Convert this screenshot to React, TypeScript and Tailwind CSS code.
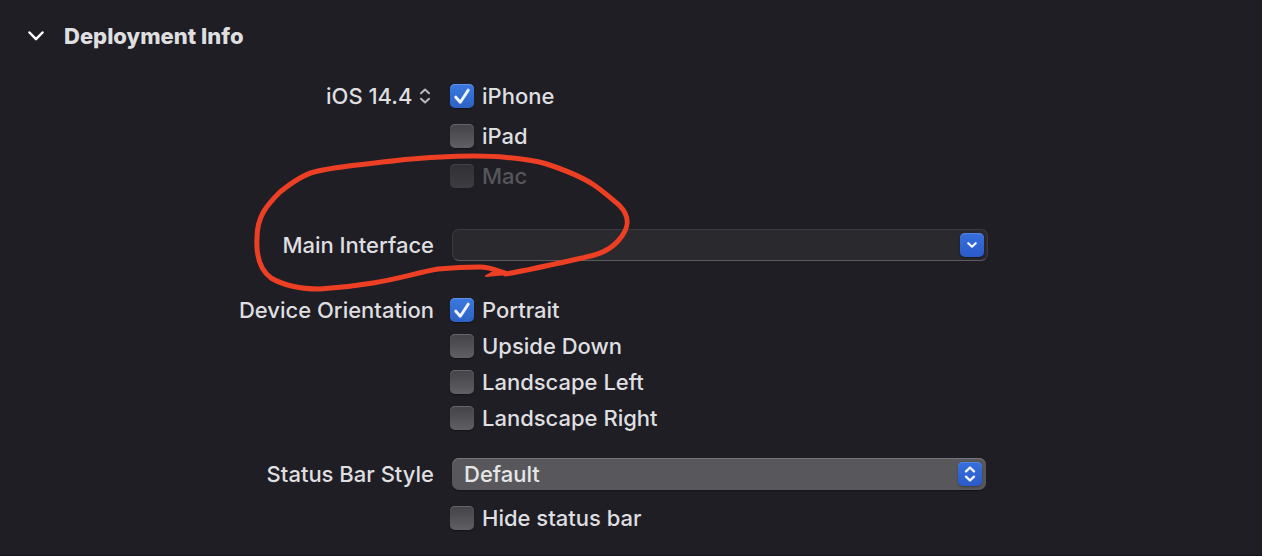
import { useState } from "react";
import type { ReactNode } from "react";

function CheckRow({
  label,
  checked = false,
  disabled = false,
}: {
  label: string;
  checked?: boolean;
  disabled?: boolean;
}) {
  const [on, setOn] = useState(checked);
  return (
    <label className={`flex h-6 w-fit items-center gap-2 ${disabled ? "text-[#56565b]" : ""}`}>
      <span className="grid size-6 shrink-0">
        <input
          type="checkbox"
          checked={on}
          disabled={disabled}
          onChange={() => setOn(!on)}
          className="col-start-1 row-start-1 size-6 appearance-none rounded-[5px] bg-linear-to-b from-[#434347] to-[#606064] shadow-[inset_0_1px_0_#66666a,0_1px_1px_#131318] checked:from-[#3b79df] checked:to-[#2d62c4] checked:shadow-[inset_0_1px_0_#5d92ea,0_1px_1px_#131318] disabled:from-[#303034] disabled:to-[#3e3e42] disabled:shadow-[inset_0_1px_0_#424246]"
        />
        {on && (
          <svg
            viewBox="0 0 24 24"
            className="pointer-events-none col-start-1 row-start-1 size-6"
            fill="none"
            stroke="#eef3fd"
            strokeWidth="3"
            strokeLinecap="round"
            strokeLinejoin="round"
            aria-hidden="true"
          >
            <path d="M5.8 13.2 L10.3 18.2 L18.2 6.2" />
          </svg>
        )}
      </span>
      {label}
    </label>
  );
}

function UpDown({ className, width }: { className: string; width: string }) {
  return (
    <svg
      viewBox="0 0 12 18"
      className={className}
      fill="none"
      stroke="currentColor"
      strokeWidth={width}
      strokeLinecap="round"
      strokeLinejoin="round"
      aria-hidden="true"
    >
      <path d="M2 6.3 L6 2.5 L10 6.3 M2 11.7 L6 15.5 L10 11.7" />
    </svg>
  );
}

function Row({ label, children }: { label: ReactNode; children: ReactNode }) {
  return (
    <div className="grid grid-cols-[434px_minmax(0,1fr)] items-start gap-x-4">
      <div className="flex justify-end">{label}</div>
      <div>{children}</div>
    </div>
  );
}

export default function App() {
  const [open, setOpen] = useState(true);
  return (
    <main className="relative min-h-screen overflow-hidden border-b border-[#141319] bg-[#1f1e25] pt-5 pb-6 font-['Inter','Liberation_Sans',sans-serif] text-[22px] leading-6 font-medium text-[#dfdfe0]">
      <h2 className="pl-7 font-extrabold">
        <button
          type="button"
          aria-expanded={open}
          onClick={() => setOpen(!open)}
          className="flex h-8 items-center gap-5"
        >
          <svg
            viewBox="0 0 16 10"
            className="h-[10px] w-4"
            fill="none"
            stroke="#ffffff"
            strokeWidth="2.5"
            strokeLinecap="round"
            strokeLinejoin="round"
            aria-hidden="true"
          >
            <path d="M1.5 1.5 L8 8.2 L14.5 1.5" />
          </svg>
          Deployment Info
        </button>
      </h2>

      {open && (
        <div className="pt-8">
          <Row
            label={
              <label className="flex h-6 items-center pr-[3px]">
                <select
                  aria-label="Deployment target"
                  className="h-6 appearance-none bg-transparent leading-6"
                >
                  <option>iOS 14.4</option>
                </select>
                <UpDown className="ml-1.5 h-[18px] w-3 text-[#b9b9bb]" width="2" />
              </label>
            }
          >
            <div className="flex flex-col gap-4">
              <CheckRow label="iPhone" checked />
              <CheckRow label="iPad" />
              <CheckRow label="Mac" disabled />
            </div>
          </Row>

          <div className="pt-[41px]">
            <Row
              label={
                <label htmlFor="main-interface" className="flex h-8 items-center">
                  Main Interface
                </label>
              }
            >
              <div className="ml-0.5 flex h-8 max-w-[536px] items-center rounded-[7px] border border-[#3a3a3f] border-b-[#5c5c60] bg-[#29292e] pr-[3px]">
                <input
                  id="main-interface"
                  type="text"
                  className="h-full min-w-0 flex-1 bg-transparent px-3 outline-none"
                />
                <button
                  type="button"
                  aria-label="Show interfaces"
                  className="flex size-6 items-center justify-center rounded-[5px] bg-linear-to-b from-[#376fdc] to-[#2a5bc8] shadow-[inset_0_1px_0_#4f84e6,0_1px_2px_#17171c]"
                >
                  <svg
                    viewBox="0 0 10 6"
                    className="h-1.5 w-2.5"
                    fill="none"
                    stroke="#f0f4fd"
                    strokeWidth="2.2"
                    strokeLinecap="round"
                    strokeLinejoin="round"
                    aria-hidden="true"
                  >
                    <path d="M1.3 1.2 L5 4.7 L8.7 1.2" />
                  </svg>
                </button>
              </div>
            </Row>
          </div>

          <div className="pt-[37px]">
            <Row label={<span id="orientation">Device Orientation</span>}>
              <div role="group" aria-labelledby="orientation" className="flex flex-col gap-3">
                <CheckRow label="Portrait" checked />
                <CheckRow label="Upside Down" />
                <CheckRow label="Landscape Left" />
                <CheckRow label="Landscape Right" />
              </div>
            </Row>
          </div>

          <div className="pt-7">
            <Row
              label={
                <label htmlFor="status-bar" className="flex h-8 items-center">
                  Status Bar Style
                </label>
              }
            >
              <div className="ml-0.5 grid h-8 max-w-[534px] items-center">
                <select
                  id="status-bar"
                  className="col-start-1 row-start-1 h-8 w-full appearance-none rounded-[7px] bg-[#58585c] px-3 leading-8 text-[#e6e6e7] shadow-[inset_0_1px_0_#767679,0_1px_1px_#131318]"
                >
                  <option>Default</option>
                </select>
                <span className="pointer-events-none col-start-1 row-start-1 mr-1 flex size-6 items-center justify-center justify-self-end rounded-[5px] bg-linear-to-b from-[#376fdc] to-[#2a5bc8] shadow-[inset_0_1px_0_#4f84e6,0_1px_2px_#3c3c40]">
                  <UpDown className="h-[18px] w-3 text-[#f0f4fd]" width="2.4" />
                </span>
              </div>
            </Row>
          </div>

          <div className="pt-4">
            <Row label={null}>
              <CheckRow label="Hide status bar" />
            </Row>
          </div>
        </div>
      )}

      <svg
        viewBox="0 0 390 150"
        className="pointer-events-none absolute top-[145px] left-[245px] h-[150px] w-[390px]"
        fill="none"
        stroke="#ec3f24"
        strokeWidth="5"
        strokeLinecap="round"
        strokeLinejoin="round"
        aria-hidden="true"
      >
        <path d="M260 128 C251 126 247 122 235 122 C222 122 204 123 193 124 C175 127 153 134 128 138 C110 141 92 143 75 144 C55 144 38 140 26 133 C14 124 11 110 12 93 C12 71 22 60 35 47 C45 39 57 30 69 27 C90 21 125 19 160 14.500 C190 11.500 235 9.500 262 12.500 C278 14 288 15 300 18.500 C317 24 337 32 349 40 C359 47 367 54 374 60 C388 74 382 86 373 96 C360 110 345 111 328 115 C305 120 280 126 260 129" />
        <path d="M241 131 L262 129 L248 127 Z" fill="#ec3f24" strokeWidth="2" />
      </svg>
    </main>
  );
}
